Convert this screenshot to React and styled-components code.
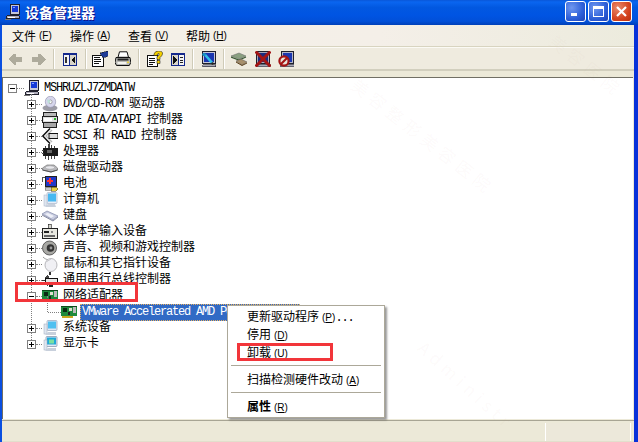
import React from "react";
import styled, { createGlobalStyle } from "styled-components";

const Global = createGlobalStyle`
  html, body { margin: 0; padding: 0; background: #fff; }
  #root { width: 638px; height: 442px; overflow: hidden; }
  * { box-sizing: border-box; }
`;

const Win = styled.div`
  position: relative; width: 638px; height: 442px; overflow: hidden;
  display: flex; flex-direction: column;
  font-family: "Liberation Mono", "Noto Sans CJK SC", monospace;
  font-size: 12px; color: #000;
`;
const TitleBar = styled.div`
  height: 25px; flex: none; display: flex; align-items: center; padding: 0 6px 2px 5px;
  background: linear-gradient(180deg, #0a57d8 0%, #0a66f0 8%, #0258e0 30%, #0054e3 60%, #0150d8 85%, #0040b8 100%);
`;
const TitleText = styled.div`
  margin-left: 4px; flex: 1; color: #fff; font: bold 14px/18px "Noto Sans CJK SC", sans-serif;
  text-shadow: 1px 1px 0 #0f1089;
`;
const CaptionBtn = styled.div`
  width: 21px; height: 21px; margin-left: 2px; border: 1px solid #fff; border-radius: 3px;
  display: flex; align-items: center; justify-content: center;
  background: ${p => p.$close
    ? "radial-gradient(circle at 30% 30%, #e88a6c, #d5441f 60%, #b8300f)"
    : "radial-gradient(circle at 30% 30%, #6f97ef, #2d5fd8 60%, #1d43b8)"};
`;
const Body = styled.div`
  flex: 1; min-height: 0; display: flex; flex-direction: column;
  border-left: 2px solid #0a4fe0; border-right: 4px solid #0831d9; background: #ece9d8;
`;
const MenuBar = styled.div`
  height: 22px; flex: none; display: flex; align-items: center; gap: 18px; padding: 0 0 0 10px;
  background: linear-gradient(90deg, #f4f1e8, #f4efe8 60%, #ecebdd); border-bottom: 1px solid #d8d4c0;
`;
const MenuLabel = styled.span` display: inline-flex; align-items: center; width: 40px; white-space: nowrap; `;
const Key = styled.span`
  font: 10px "Liberation Sans", sans-serif; margin-left: 3px; white-space: pre;
`;
const Under = styled.span` text-decoration: underline; `;
const Toolbar = styled.div`
  height: 24px; flex: none; display: flex; align-items: center; padding-left: 6px;
  background: #efebdf; border-top: 1px solid #fbfaf5; border-bottom: 2px solid #d2cfbe;
`;
const ToolIcon = styled.span`
  display: inline-flex; width: 16px; height: 16px; margin-left: ${p => p.$gap ?? 7}px; flex: none;
`;
const ToolSep = styled.span`
  width: 2px; height: 20px; margin-left: ${p => p.$gap ?? 7}px; flex: none;
  background: linear-gradient(90deg, #cfcbb8 50%, #fff 50%);
`;
const TreePane = styled.div`
  flex: 1; min-height: 0; margin: 6px 1px 1px 0; background: #fff; position: relative;
  border-top: 1px solid #716f64; border-left: 1px solid #716f64; padding-top: 2px;
`;
const Row = styled.div`
  display: flex; align-items: center; height: 16px;
  padding-left: ${p => p.$indent}px; white-space: nowrap; position: relative;
`;
const Expander = styled.span`
  width: 9px; height: 9px; flex: none; border: 1px solid #808080; position: relative; z-index: 1;
  background:
    linear-gradient(#000,#000) center/5px 1px no-repeat,
    ${p => p.$open ? "" : "linear-gradient(#000,#000) center/1px 5px no-repeat,"}
    #fff;
`;
const Stub = styled.span`
  width: ${p => p.$w}px; height: 0; flex: none; border-top: 1px dotted #808080;
`;
const NodeIcon = styled.span` display: inline-flex; width: 16px; height: 16px; flex: none; `;
const Label = styled.span`
  margin-left: ${p => p.$gap ?? 5}px; line-height: 16px; white-space: pre;
`;
const Selected = styled.span`
  margin-left: 3px; height: 17px; line-height: 15px; padding: 0 1px 0 1px; white-space: pre;
  background: #316ac5; color: #fff; border: 1px dotted #e8b060;
`;
const Latin = styled.span`
  font-family: "Liberation Mono", monospace; font-size: 12px; letter-spacing: -1.2px;
`;
const ChildList = styled.div`
  position: relative;
  &::before {
    content: ""; position: absolute; left: 28px; top: -2px; bottom: 8px;
    border-left: 1px dotted #808080;
  }
`;
const DeviceRow = styled(Row)`
  &::before {
    content: ""; position: absolute; left: 44px; top: -8px; height: 16px;
    border-left: 1px dotted #808080;
  }
`;
const StatusBar = styled.div`
  height: 22px; flex: none; display: flex; justify-content: flex-end; padding: 2px 3px 0 0;
  background: #ece9d8; border-top: 1px solid #a8a594; box-shadow: inset 0 -1px 0 #e2dfcc;
`;
const StatusCell = styled.div`
  width: ${p => p.$w}px; height: 18px; border-left: 1px solid #fff; background: #ece8da;
`;
const Highlight = styled.div`
  position: absolute; border: 3px solid #f2353a; z-index: 5; pointer-events: none;
  left: ${p => p.$x}px; top: ${p => p.$y}px; width: ${p => p.$w}px; height: ${p => p.$h}px;
`;
const ContextMenu = styled.div`
  position: absolute; left: 227px; top: 305px; width: 158px; height: 113px; z-index: 4;
  background: #fff; border: 1px solid #aca899; padding: 3px 2px 2px;
  box-shadow: 2px 2px 2px rgba(70,70,70,.55);
`;
const MenuItem = styled.div`
  height: 18px; line-height: 18px; padding-left: 17px; white-space: pre;
  font-weight: ${p => p.$bold ? 700 : 400};
`;
const MenuSep = styled.div`
  height: 1px; background: #aca899; margin: ${p => p.$top}px 1px ${p => p.$bottom}px;
`;
const Watermark = styled.div`
  position: absolute; z-index: 2; pointer-events: none; white-space: nowrap;
  left: ${p => p.$x}px; top: ${p => p.$y}px; transform: rotate(${p => p.$r ?? 38}deg); transform-origin: 0 0;
  font: 17px "Noto Sans CJK SC", sans-serif; letter-spacing: 5px; color: rgba(200,150,140,.05);
`;

const svg = (children) => (
  <svg width="16" height="16" viewBox="0 0 16 16" shapeRendering="crispEdges">{children}</svg>
);

const I = {
  computer: svg(<>
    <rect x="5.5" y="0.5" width="9" height="10" fill="#c4c6d8" stroke="#20202c" />
    <rect x="7" y="2" width="6" height="6" fill="#1438d8" />
    <rect x="8" y="3" width="2" height="1" fill="#7fa0ff" />
    <path d="M2.5 11.5h11l1 1v2H1.5v-2z" fill="#b0aebc" stroke="#20202c" />
    <rect x="3" y="13" width="7" height="1" fill="#fff" />
    <rect x="0" y="15" width="6" height="1" fill="#777" />
  </>),
  dvd: svg(<g shapeRendering="auto">
    <ellipse cx="8" cy="12" rx="7.5" ry="3.2" fill="#9c9ca6" />
    <ellipse cx="8.5" cy="5.8" rx="5.2" ry="5.6" fill="#d6d6ec" stroke="#8c8ca8" strokeWidth=".6" />
    <ellipse cx="8.5" cy="5.8" rx="1.6" ry="1.8" fill="#fff" stroke="#777" strokeWidth=".6" />
    <path d="M5 3 L9 5 L6 8Z" fill="#bce0d8" />
  </g>),
  ide: svg(<>
    <rect x="1.5" y="0.5" width="13" height="4" fill="#b9b9b9" stroke="#222" />
    <rect x="0.5" y="4.5" width="15" height="6" fill="#e0e0e0" stroke="#222" />
    <rect x="2" y="6" width="8" height="3" fill="#fff" />
    <rect x="12" y="6" width="2" height="2" fill="#2db02d" />
    <rect x="1.5" y="10.5" width="13" height="5" fill="#a8a8a8" stroke="#222" />
  </>),
  scsi: svg(<g shapeRendering="auto">
    <path d="M8 0.5 L0.8 8 L8 15.5" fill="none" stroke="#111" strokeWidth="1.5" />
    <path d="M10 2 L4 8 L10 14" fill="none" stroke="#bbb" strokeWidth="1.4" />
    <rect x="7" y="5.5" width="9" height="5" fill="#ddd" stroke="#111" />
  </g>),
  cpu: svg(<g>
    <rect x="1" y="4" width="15" height="8" fill="#1a1a1a" />
    <path d="M3 2h1v2H3zM6 0h2v4H6zM9 1h1v3H9zM12 2h1v2h-1zM0 6h2v1H0zM0 9h2v1H0zM3 12h1v3H3zM6 12h1v4H6zM9 12h1v3H9zM12 12h1v3h-1z" fill="#444" />
    <rect x="5" y="6" width="5" height="3" fill="#666" />
  </g>),
  disk: svg(<g shapeRendering="auto">
    <path d="M0.5 8 L5 5 L12 5 L15.5 8 L15.5 10 L9 12 L0.5 10Z" fill="#b8b8bc" stroke="#777" strokeWidth=".7" />
    <ellipse cx="8" cy="7.5" rx="4.5" ry="1.7" fill="#e8e8ec" stroke="#999" strokeWidth=".5" />
    <path d="M0.5 10 L9 12 L15.5 10" fill="none" stroke="#555" strokeWidth="1" />
  </g>),
  battery: svg(<>
    <path d="M0 1h3v1H1v4H0z" fill="#555" />
    <rect x="3.5" y="0.5" width="11" height="10" fill="#2038c8" stroke="#222" />
    <rect x="7" y="2" width="2" height="6" fill="#f33" />
    <rect x="5" y="4" width="6" height="2" fill="#f33" />
    <rect x="3" y="11" width="6" height="3" fill="#c8c8c8" stroke="#555" strokeWidth=".5" />
    <path d="M9 11h5l2 2-2 2H9z" fill="#e8d040" stroke="#333" strokeWidth=".5" />
  </>),
  pc: svg(<g shapeRendering="auto">
    <rect x="5" y="0.5" width="10" height="11" rx="1" fill="#e8eef8" stroke="#a8b4c8" strokeWidth=".7" />
    <rect x="6" y="1.5" width="8" height="8" fill="#48b8f0" />
    <rect x="2" y="3" width="3" height="11" fill="#dfe6f0" stroke="#a8b4c8" strokeWidth=".5" />
    <path d="M3 15 L14 15 L13 12 L6 12 Z" fill="#c8d0dc" />
  </g>),
  keyboard: svg(<g shapeRendering="auto">
    <path d="M0 6 L5 3 L16 8 L11 12 Z" fill="#c8cce0" stroke="#8088a8" strokeWidth=".7" />
    <path d="M3 6 L6 5 L12 8 L9 10 Z" fill="#eef0f8" />
    <path d="M0 7 L11 13 L16 9" fill="none" stroke="#666c88" strokeWidth=".8" />
  </g>),
  hid: svg(<>
    <path d="M6 0h3v5H6z" fill="#d8d8d0" stroke="#222" strokeWidth=".6" />
    <rect x="0.5" y="4.5" width="15" height="10" fill="#e8e8e0" stroke="#222" />
    <rect x="2" y="7" width="5" height="2" fill="#222" /><rect x="9" y="7" width="2" height="2" fill="#888" />
    <rect x="2" y="11" width="11" height="2" fill="#666" />
  </>),
  sound: svg(<g shapeRendering="auto">
    <circle cx="7.5" cy="8" r="7" fill="#a8a8a4" stroke="#444" strokeWidth=".8" />
    <circle cx="8.5" cy="8" r="3.8" fill="#333" />
    <circle cx="9" cy="8" r="1.4" fill="#999" />
  </g>),
  mouse: svg(<g shapeRendering="auto">
    <path d="M1 1 C3 3 4 3 6 4" fill="none" stroke="#999" strokeWidth="1" />
    <ellipse cx="9" cy="9" rx="6" ry="6.5" fill="#f0f0f4" stroke="#a8a8ac" strokeWidth=".8" />
    <path d="M4 6 L9 3" stroke="#c8c8cc" strokeWidth="1" />
  </g>),
  usb: svg(<g>
    <path d="M7 0h2v3H7zM0 8h3v1H0z" fill="#333" />
    <rect x="3" y="6" width="12.5" height="5" fill="#e8e8e8" stroke="#111" />
    <path d="M6 2 L2 6 h5z M6 15 L2 11 h5z" fill="#444" />
    <rect x="7" y="11" width="4" height="4" fill="#222" />
  </g>),
  net: svg(<>
    <rect x="0" y="2" width="16" height="10" fill="#1e8a3c" />
    <rect x="0" y="2" width="16" height="1" fill="#0c4a1c" />
    <rect x="2" y="4" width="4" height="4" fill="#0a2a12" />
    <rect x="8" y="4" width="3" height="3" fill="#e0e0d0" />
    <rect x="12" y="3" width="3" height="6" fill="#bbb" />
    <rect x="1" y="12" width="11" height="2" fill="#c8a820" />
    <rect x="7" y="8" width="2" height="3" fill="#222" />
  </>),
  system: svg(<g shapeRendering="auto">
    <rect x="5" y="0.5" width="10" height="10" rx="1" fill="#dfe8f4" stroke="#96a4bc" strokeWidth=".7" />
    <rect x="6" y="1.5" width="8" height="7" fill="#50c0f0" />
    <rect x="2" y="4" width="3" height="10" fill="#dfe6f0" stroke="#a0aabc" strokeWidth=".5" />
    <path d="M3 15 L14 15 L14 12 L6 12 Z" fill="#c8d0dc" />
  </g>),
  display: svg(<g shapeRendering="auto">
    <rect x="4" y="0.5" width="11" height="10" rx="1" fill="#dfe8f4" stroke="#7c8ca8" strokeWidth=".7" />
    <rect x="5" y="1.5" width="9" height="7" fill="#20a8d8" />
    <rect x="7" y="3.5" width="5" height="4" fill="#7ce0a0" />
    <rect x="2" y="4" width="3" height="10" fill="#dfe6f0" stroke="#a0aabc" strokeWidth=".5" />
    <path d="M3 15 L14 15 L14 12 L6 12 Z" fill="#c8d0dc" />
  </g>),
  back: svg(<path d="M0 8 L6 3 H8 V6 H14 V11 H8 V14 H6 Z" fill="#aeab9c" />),
  forward: svg(<path d="M15 8 L9 3 H7 V6 H1 V11 H7 V14 H9 Z" fill="#aeab9c" />),
  panelL: svg(<>
    <rect x="1" y="2" width="14" height="13" fill="#14288c" />
    <rect x="2" y="4" width="5" height="10" fill="#f4f4f4" />
    <rect x="8" y="4" width="6" height="10" fill="#d8d4c8" />
    <rect x="3" y="6" width="2" height="6" fill="#333" />
    <path d="M13 5v8l-4-4z" fill="#111" />
  </>),
  props: svg(<>
    <path d="M0.5 4.5h11v11H0.5z" fill="#fff" stroke="#111" />
    <path d="M2 6h6v1H2zM2 8h7v1H2zM2 10h7v1H2zM2 12h5v1H2z" fill="#111" />
    <path d="M8 2 L16 0 V5 L11 7 Z" fill="#1f3b96" stroke="#111" strokeWidth=".5" />
  </>),
  print: svg(<g shapeRendering="auto">
    <path d="M4.5 0.8 h7.5 l1.5 5.5 h-10.5 z" fill="#fff" stroke="#111" strokeWidth="1" />
    <path d="M1 6.5 h14 l0.8 5 l-1.5 3 h-12.8 l-1.5 -3 z" fill="#b8b8b4" stroke="#111" strokeWidth="1" />
    <rect x="2.5" y="7.5" width="11" height="2" fill="#222" />
    <rect x="2.5" y="11" width="9" height="2" fill="#f4f4f0" />
    <rect x="12" y="10.5" width="2" height="1.5" fill="#e8d040" />
  </g>),
  help: svg(<>
    <path d="M0.5 4.5h10v11H0.5z" fill="#fff" stroke="#111" />
    <path d="M2 7h6v1H2zM2 9h6v1H2zM2 11h6v1H2zM2 13h4v1H2z" fill="#111" />
    <g shapeRendering="auto">
      <path d="M7 3 Q8 0 11.5 0 Q16 0 15.5 3 Q15 5 13 6.5 V8.5 H10 V5.5 Q13 4.5 12 2.5 Q10 2.5 10 4.5 H7 Z M10 9.5 h3 v3 h-3 Z" fill="#f4d000" stroke="#222" strokeWidth=".6" />
    </g>
  </>),
  panelR: svg(<>
    <rect x="1" y="2" width="14" height="13" fill="#14288c" />
    <rect x="2" y="4" width="6" height="10" fill="#d8d4c8" />
    <rect x="9" y="4" width="5" height="10" fill="#f4f4f4" />
    <path d="M3 5v8l4-4z" fill="#111" />
    <path d="M10 6h3v1h-3zM10 9h3v1h-3zM10 11h3v1h-3z" fill="#222" />
  </>),
  scan: svg(<>
    <rect x="1.5" y="0.5" width="13" height="12" fill="#c4c6d8" stroke="#20202c" />
    <rect x="3" y="2" width="10" height="9" fill="#1a36b0" />
    <path d="M1.5 13.5h13v2h-13z" fill="#a8a8b4" stroke="#20202c" strokeWidth=".6" />
    <g shapeRendering="auto">
      <path d="M2.5 2.5 L5 3 L12 11 L10 12.5 L3.5 5 Z" fill="#30c0e8" />
      <circle cx="3" cy="3.5" r="1.8" fill="#1a8fc0" />
      <circle cx="11.5" cy="12.5" r="1.2" fill="#222" />
    </g>
  </>),
  update: svg(<g shapeRendering="auto">
    <path d="M0 5 L8 2 L15 5 L8 8 Z" fill="#8aa080" stroke="#666" strokeWidth=".5" />
    <path d="M0 6 L8 9 L15 6" fill="none" stroke="#3a5a34" strokeWidth="1.2" />
    <path d="M5 10 L10 8 L16 11 L11 14 Z" fill="#a8906c" stroke="#555" strokeWidth=".5" />
    <path d="M5 11 L11 14.5 L16 12" fill="none" stroke="#5c3f18" strokeWidth="1" />
  </g>),
  remove: svg(<>
    <rect x="1.5" y="0.5" width="13" height="12" fill="#a8a8b8" stroke="#20202c" />
    <rect x="3" y="2" width="10" height="9" fill="#1a2c80" />
    <rect x="1" y="13" width="14" height="2.5" fill="#a8a8b4" stroke="#20202c" strokeWidth=".5" />
    <path d="M0.5 0.5 L15.5 15.5 M15.5 0.5 L0.5 15.5" stroke="#a31414" strokeWidth="3" shapeRendering="auto" />
  </>),
  disable: svg(<>
    <rect x="3.5" y="0.5" width="12" height="12" fill="#b4b6c8" stroke="#20202c" />
    <rect x="5" y="2" width="9" height="9" fill="#1a36b0" />
    <rect x="2" y="13" width="14" height="2.5" fill="#a8a8b4" stroke="#20202c" strokeWidth=".5" />
    <g shapeRendering="auto">
      <circle cx="6" cy="10" r="4.6" fill="#e8e4dc" stroke="#a31414" strokeWidth="2.2" />
      <path d="M3 13 L9 7" stroke="#a31414" strokeWidth="2.2" />
    </g>
  </>),
};

const T = ({ children }) =>
  children.split(/([\x00-\x7f]+)/).filter(Boolean).map((part, i) =>
    /^[\x00-\x7f]+$/.test(part) ? <Latin key={i}>{part}</Latin> : <span key={i}>{part}</span>
  );

const devices = [
  ["dvd", "DVD/CD-ROM 驱动器"],
  ["ide", "IDE ATA/ATAPI 控制器"],
  ["scsi", "SCSI 和 RAID 控制器"],
  ["cpu", "处理器"],
  ["disk", "磁盘驱动器"],
  ["battery", "电池"],
  ["pc", "计算机"],
  ["keyboard", "键盘"],
  ["hid", "人体学输入设备"],
  ["sound", "声音、视频和游戏控制器"],
  ["mouse", "鼠标和其它指针设备"],
  ["usb", "通用串行总线控制器"],
];

const Node = ({ icon, label, open }) => (
  <Row $indent={24}>
    <Expander $open={open} />
    <Stub $w={6} />
    <NodeIcon>{I[icon]}</NodeIcon>
    <Label><T>{label}</T></Label>
  </Row>
);

const menus = [["文件", "F"], ["操作", "A"], ["查看", "V"], ["帮助", "H"]];

const Hot = ({ k }) => <Key>(<Under>{k}</Under>)</Key>;

export default function App() {
  return (
    <Win>
      <Global />
      <TitleBar>
        <NodeIcon>{I.computer}</NodeIcon>
        <TitleText>设备管理器</TitleText>
        <CaptionBtn>
          <svg width="11" height="11" viewBox="0 0 11 11" shapeRendering="crispEdges"><rect x="1" y="7" width="6" height="3" fill="#fff" /></svg>
        </CaptionBtn>
        <CaptionBtn>
          <svg width="13" height="13" viewBox="0 0 13 13" shapeRendering="crispEdges"><path d="M1.5 1.5h10v10h-10z" fill="none" stroke="#fff" /><rect x="1" y="1" width="11" height="3" fill="#fff" /></svg>
        </CaptionBtn>
        <CaptionBtn $close>
          <svg width="13" height="13" viewBox="0 0 13 13"><path d="M2 2 L11 11 M11 2 L2 11" stroke="#fff" strokeWidth="2.2" /></svg>
        </CaptionBtn>
      </TitleBar>
      <Body>
        <MenuBar>
          {menus.map(([n, k]) => <MenuLabel key={k}>{n}<Hot k={k} /></MenuLabel>)}
        </MenuBar>
        <Toolbar>
          <ToolIcon $gap={0}>{I.back}</ToolIcon>
          <ToolIcon>{I.forward}</ToolIcon>
          <ToolSep $gap={6} />
          <ToolIcon>{I.panelL}</ToolIcon>
          <ToolSep />
          <ToolIcon $gap={5}>{I.props}</ToolIcon>
          <ToolIcon>{I.print}</ToolIcon>
          <ToolSep />
          <ToolIcon>{I.help}</ToolIcon>
          <ToolIcon>{I.panelR}</ToolIcon>
          <ToolSep $gap={6} />
          <ToolIcon>{I.scan}</ToolIcon>
          <ToolSep $gap={6} />
          <ToolIcon $gap={6}>{I.update}</ToolIcon>
          <ToolIcon $gap={8}>{I.remove}</ToolIcon>
          <ToolIcon>{I.disable}</ToolIcon>
        </Toolbar>
        <TreePane>
          <Row $indent={5}>
            <Expander $open />
            <Stub $w={7} />
            <NodeIcon>{I.computer}</NodeIcon>
            <Label $gap={4}><T>MSHRUZLJ7ZMDATW</T></Label>
          </Row>
          <ChildList>
            {devices.map(([ic, l]) => <Node key={l} icon={ic} label={l} />)}
            <Node icon="net" label="网络适配器" open />
            <DeviceRow $indent={45}>
              <Stub $w={13} />
              <NodeIcon>{I.net}</NodeIcon>
              <Selected><T>VMware Accelerated AMD PCNet Adapter</T></Selected>
            </DeviceRow>
            <Node icon="system" label="系统设备" />
            <Node icon="display" label="显示卡" />
          </ChildList>
        </TreePane>
        <StatusBar>
          <StatusCell $w={85} />
          <StatusCell $w={1} />
        </StatusBar>
      </Body>

      <Watermark $x={362} $y={72}>美容整形美容医院</Watermark>
      <Watermark $x={560} $y={28}>美容医院</Watermark>
      <Watermark $x={430} $y={335} $r={42}>Administr</Watermark>

      <Highlight $x={15} $y={282} $w={123} $h={20} />
      <ContextMenu>
        <MenuItem>更新驱动程序<Hot k="P" /><Latin>...</Latin></MenuItem>
        <MenuItem>停用<Hot k="D" /></MenuItem>
        <MenuItem>卸载<Hot k="U" /></MenuItem>
        <MenuSep $top={2} $bottom={6} />
        <MenuItem>扫描检测硬件改动<Hot k="A" /></MenuItem>
        <MenuSep $top={2} $bottom={6} />
        <MenuItem $bold>属性<Hot k="R" /></MenuItem>
      </ContextMenu>
      <Highlight $x={237} $y={343} $w={96} $h={18} />
    </Win>
  );
}
